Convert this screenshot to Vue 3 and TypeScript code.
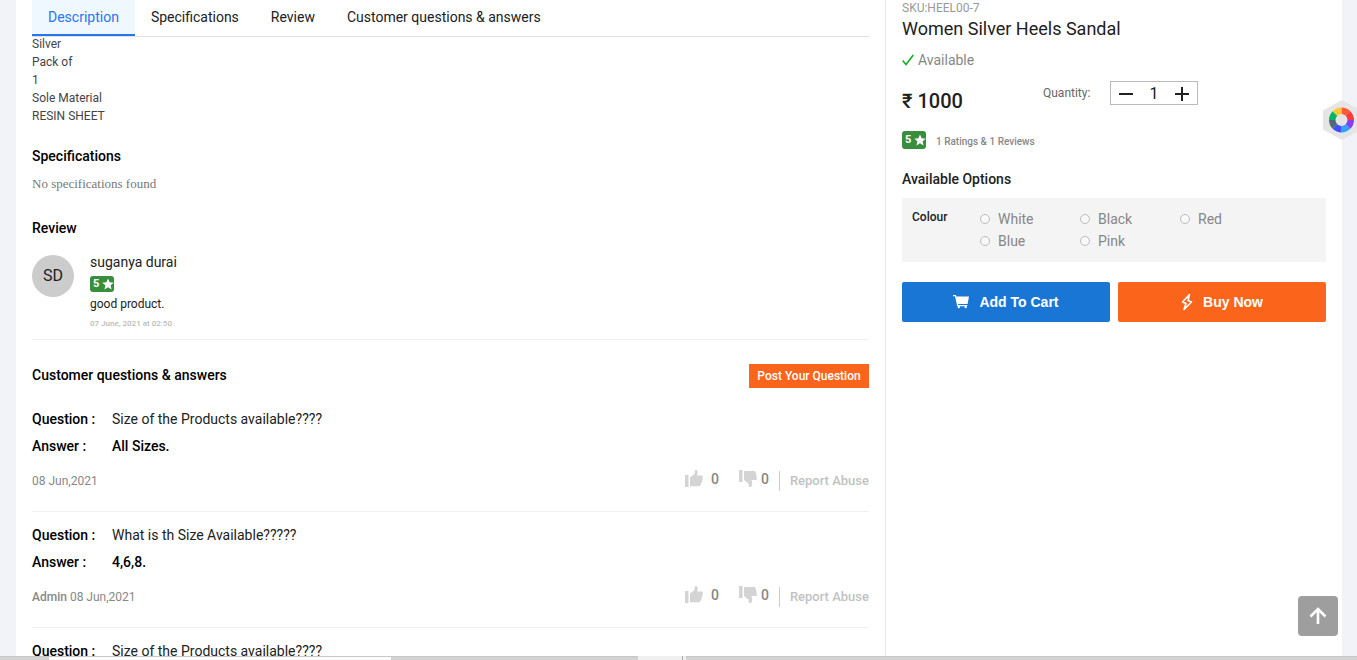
<script setup lang="ts">
import { ref } from 'vue'

interface Qa {
  question: string
  answer?: string
  author?: string
  date?: string
}

const tabs = ['Description', 'Specifications', 'Review', 'Customer questions & answers']
const activeTab = ref(tabs[0])
const details = ['Silver', 'Pack of', '1', 'Sole Material', 'RESIN SHEET']
const colours = ['White', 'Black', 'Red', 'Blue', 'Pink']
const colour = ref('')
const quantity = ref(1)

const questions: Qa[] = [
  { question: 'Size of the Products available????', answer: 'All Sizes.', date: '08 Jun,2021' },
  { question: 'What is th Size Available?????', answer: '4,6,8.', author: 'Admin', date: '08 Jun,2021' },
  { question: 'Size of the Products available????' },
]

const wheel = ['#ff5a36', '#f93a3f', '#8a3df0', '#35a0fb', '#3d50fb', '#526a78', '#00b564', '#ffc832'].map((fill, i) => {
  const a = ((i * 45 - 90) * Math.PI) / 180
  const b = a + Math.PI / 4
  const p = (r: number, t: number) => `${r * Math.cos(t)} ${r * Math.sin(t)}`
  return { fill, d: `M${p(12.5, a)}A12.5 12.5 0 0 1 ${p(12.5, b)}L${p(6, b)}A6 6 0 0 0 ${p(6, a)}Z` }
})
</script>

<template>
  <div class="page">
    <div class="sheet">
      <main class="info">
        <nav class="tabs">
          <a
            v-for="tab in tabs"
            :key="tab"
            href="#"
            class="tab"
            :class="{ active: tab === activeTab }"
            @click.prevent="activeTab = tab"
          >{{ tab }}</a>
        </nav>

        <section class="details">
          <p v-for="line in details" :key="line">{{ line }}</p>
        </section>

        <section class="block">
          <h2>Specifications</h2>
          <p class="empty">No specifications found</p>
        </section>

        <section class="block reviews">
          <h2>Review</h2>
          <article class="review">
            <div class="avatar">SD</div>
            <div class="review-body">
              <div class="reviewer">suganya durai</div>
              <span class="badge">5<svg viewBox="0 0 24 24"><path d="M12 1l3.200 7.600 8.300.7-6.300 5.400 1.900 8.100L12 18.500l-7.100 4.300 1.900-8.100L.5 9.300l8.300-.7z" /></svg></span>
              <p class="comment">good product.</p>
              <time class="when">07 June, 2021 at 02:50</time>
            </div>
          </article>
        </section>

        <section class="qa">
          <header class="qa-head">
            <h2>Customer questions &amp; answers</h2>
            <button type="button" class="post">Post Your Question</button>
          </header>
          <article v-for="(item, i) in questions" :key="i" class="qa-item">
            <dl>
              <dt>Question :</dt>
              <dd>{{ item.question }}</dd>
              <template v-if="item.answer">
                <dt>Answer :</dt>
                <dd class="answer">{{ item.answer }}</dd>
              </template>
            </dl>
            <footer v-if="item.date" class="meta">
              <span class="by"><b v-if="item.author">{{ item.author }}&nbsp;</b>{{ item.date }}</span>
              <button type="button" class="vote up" aria-label="Helpful">
                <svg viewBox="0 0 18 17"><path class="cuff" d="M0 5h3.500v12H0z" /><path d="M5 7.500L9.500 4l.5-4h1.500C13 1 13 3 12 5.500h5c1.300.4 1.200 2 .5 2.500.5.900.3 1.900-.4 2.400.3.900.1 1.700-.7 2.200.2 1-.2 1.700-.9 2-.1 1-.6 1.600-1.500 1.600H5z" /></svg>0
              </button>
              <button type="button" class="vote down" aria-label="Not helpful">
                <svg viewBox="0 0 18 17"><path class="cuff" d="M0 0h3.500v12H0z" /><path d="M5 1h10.500c1 .2 1 1 .9 1.500.7.500.9 1.300.6 2 .7.600.7 1.500.3 2.200.9.800.9 3-.3 3.300h-4.500c1 3 1 5.500-.5 6.900H10l-.5-3.500L5 10z" /></svg>0
              </button>
              <button type="button" class="report">Report Abuse</button>
            </footer>
          </article>
        </section>
      </main>

      <aside class="buy">
        <div class="sku">SKU:HEEL00-7</div>
        <h1>Women Silver Heels Sandal</h1>
        <div class="stock">
          <svg viewBox="0 0 12 12"><path d="M.7 6.500l3.300 4L11.300 1" /></svg>Available
        </div>
        <div class="price-row">
          <div class="price">₹ 1000</div>
          <span class="qty-label">Quantity:</span>
          <div class="stepper">
            <button type="button" aria-label="Decrease quantity" @click="quantity = Math.max(1, quantity - 1)">
              <svg viewBox="0 0 14 14"><path d="M0 7h14" /></svg>
            </button>
            <output>{{ quantity }}</output>
            <button type="button" aria-label="Increase quantity" @click="quantity++">
              <svg viewBox="0 0 14 14"><path d="M0 7h14M7 0v14" /></svg>
            </button>
          </div>
        </div>
        <div class="rating">
          <span class="badge large">5<svg viewBox="0 0 24 24"><path d="M12 1l3.200 7.600 8.300.7-6.300 5.400 1.900 8.100L12 18.500l-7.100 4.300 1.900-8.100L.5 9.300l8.300-.7z" /></svg></span>
          <span>1 Ratings &amp; 1 Reviews</span>
        </div>
        <h2>Available Options</h2>
        <fieldset class="options" aria-label="Colour">
          <div class="option-name">Colour</div>
          <div class="choices">
            <label v-for="name in colours" :key="name">
              <input v-model="colour" type="radio" name="colour" :value="name" />{{ name }}
            </label>
          </div>
        </fieldset>
        <div class="actions">
          <button type="button" class="cart">
            <svg viewBox="0 0 16 14"><path d="M0 0h2.800l.6 1.600H16L14.600 9H5l.3 1h8.900v1.200H4.300L2 1.200H0z" /><circle cx="5.800" cy="12" r="1.200" /><circle cx="12.700" cy="12" r="1.200" /></svg>
            Add To Cart
          </button>
          <button type="button" class="now">
            <svg viewBox="0 0 12 18"><path d="M8.500 1.500L1.500 9l3.500 1.500-2 6L10.500 9 7 7.500z" /></svg>
            Buy Now
          </button>
        </div>
      </aside>
    </div>

    <button type="button" class="widget" aria-label="Colour tools">
      <svg viewBox="0 0 40 40">
        <path class="hex" d="M19 0L38 10.500v19L19 40 0 29.500v-19z" />
        <g transform="translate(18.500 20)"><path v-for="s in wheel" :key="s.fill" :d="s.d" :fill="s.fill" /></g>
      </svg>
    </button>
    <button type="button" class="to-top" aria-label="Back to top">
      <svg viewBox="0 0 18 18"><path d="M9 17V2M1.500 9.500L9 2l7.500 7.500" /></svg>
    </button>
    <div class="bar"><i class="thumb"></i><i class="mark"></i></div>
  </div>
</template>

<style>
html, body { margin: 0; overflow: hidden; }
</style>

<style scoped>
* { box-sizing: border-box; }
.page {
  height: 100vh;
  overflow: hidden;
  padding: 0 15px 0 16px;
  background: #f1f3f8;
  color: #212121;
  font: 14px/20px Roboto, "Liberation Sans", sans-serif;
}
h1, h2, p, dl, dd { margin: 0; }
button { margin: 0; padding: 0; border: 0; background: none; color: inherit; font: inherit; cursor: pointer; }
svg { display: block; flex: none; }
h2 { color: #000; font-size: 14px; font-weight: 500; line-height: 20px; }

.sheet { display: flex; min-height: 100vh; background: #fff; }
.info { flex: 1; min-width: 0; padding: 0 16px; }
.buy { width: 457px; padding: 0 16px; border-left: 1px solid #e6e6e6; }

.tabs { display: flex; border-bottom: 1px solid #e0e0e0; }
.tab { padding: 0 16px; border-bottom: 2px solid transparent; color: #212121; line-height: 34px; text-decoration: none; }
.tab.active { background: #f0f8ff; border-color: #2874f0; color: #2874f0; }

.details { margin-top: -2px; color: #444; font-size: 12px; line-height: 18px; }
.block { padding-top: 21px; }
.empty { margin-top: 8px; color: #777; font: 13px/20px "Liberation Serif", serif; }
.reviews { padding-top: 24px; }

.review { display: flex; gap: 16px; padding: 14px 0 10px; border-bottom: 1px solid #f0f0f0; }
.avatar { width: 42px; height: 42px; margin-top: 3px; border-radius: 50%; background: #ccc; font-size: 16px; line-height: 42px; text-align: center; }
.review-body { display: flex; flex-direction: column; align-items: flex-start; }
.reviewer { line-height: 20px; }
.badge {
  display: flex; align-items: center; justify-content: space-between;
  width: 24px; height: 16px; padding: 0 0 0 3px; border-radius: 3px;
  background: #388e3c; color: #fff; font-size: 11px; font-weight: 700; line-height: 16px;
}
.badge svg { width: 12px; height: 12px; fill: #fff; }
.badge.large { height: 18px; line-height: 18px; }
.reviewer + .badge { margin-top: 4px; }
.comment { margin-top: 2px; font-size: 12px; line-height: 20px; }
.when { margin-top: 4px; color: #bbb; font-size: 8px; font-weight: 500; line-height: 11px; }

.qa-head { display: flex; align-items: flex-start; justify-content: space-between; padding: 24px 0 8px; }
.qa-head h2 { line-height: 22px; }
.post { width: 120px; height: 24px; background: #fb641b; color: #fff; font-size: 12px; font-weight: 500; }
.qa-item { padding: 10px 0 20px; border-bottom: 1px solid #f0f0f0; }
dl { display: grid; grid-template-columns: 80px 1fr; line-height: 27px; }
dt { color: #000; font-weight: 500; }
dd { color: #212121; }
.answer { color: #000; font-weight: 500; }
.meta { display: flex; align-items: flex-end; padding-top: 10px; color: #878787; }
.by { flex: 1; font-size: 12px; }
.by b { font-weight: 500; }
.vote { display: flex; align-items: center; gap: 8px; height: 17px; margin-bottom: 4px; font-weight: 500; }
.vote svg { width: 18px; height: 17px; fill: #d4d4d4; }
.down { gap: 4px; margin-left: 20px; margin-right: 10px; }
.report { height: 20px; margin-top: 1px; padding-left: 10px; border-left: 1px solid #ccc; color: #c2c2c2; font-size: 13px; font-weight: 500; }

.sku { color: #999; font-size: 12px; line-height: 16px; }
h1 { padding-top: 1px; font-size: 18px; font-weight: 400; line-height: 24px; }
.stock { display: flex; align-items: center; gap: 4px; margin-top: 9px; color: #878787; }
.stock svg { width: 12px; height: 12px; fill: none; stroke: #14a81c; stroke-width: 1.5; }
.price-row { display: flex; align-items: flex-start; padding-top: 11px; }
.price { width: 141px; padding-top: 8px; font-size: 20px; font-weight: 500; line-height: 24px; }
.qty-label { width: 67px; padding-top: 2px; color: #666; font-size: 12px; }
.stepper { display: flex; align-items: center; justify-content: space-between; width: 88px; height: 24px; padding: 2px 8px 0; border: 1px solid #bbb; font-size: 16px; }
.stepper svg { width: 14px; height: 14px; fill: none; stroke: #212121; stroke-width: 2; }
.rating { display: flex; align-items: flex-start; gap: 10px; margin: 18px 0 16px; color: #878787; font-size: 10px; line-height: 22px; font-weight: 500; }
.buy h2 { color: #212121; }
.options { display: flex; margin: 9px 0 20px; padding: 10px; border: 0; background: #f4f4f4; }
.option-name { width: 68px; font-size: 12px; font-weight: 500; line-height: 18px; }
.choices { flex: 1; display: grid; grid-template-columns: repeat(auto-fill, 100px); color: #878787; line-height: 22px; }
.choices label { display: flex; align-items: center; gap: 8px; }
.choices input { appearance: none; width: 10px; height: 10px; margin: 0; border: 1px solid #bbb; border-radius: 50%; background: #f8f8f8; }
.choices input:checked { border: 3px solid #2874f0; }
.actions { display: flex; gap: 8px; }
.actions button { flex: 1; display: flex; align-items: center; justify-content: center; gap: 10px; height: 40px; border-radius: 2px; color: #fff; font: 700 14px/20px "Liberation Sans", Arial, sans-serif; }
.cart { background: #1976d5; }
.now { background: #fb641b; }
.cart svg { width: 16px; height: 14px; fill: #fff; }
.now svg { width: 12px; height: 18px; fill: none; stroke: #fff; stroke-width: 1.6; stroke-linejoin: round; }

.widget { position: fixed; right: -6px; top: 100px; width: 40px; height: 40px; }
.hex { fill: #e5e5e5; }
.to-top { position: fixed; right: 19px; bottom: 24px; display: grid; place-items: center; width: 40px; height: 40px; border-radius: 4px; background: #9e9e9e; }
.to-top svg { width: 18px; height: 18px; fill: none; stroke: #fff; stroke-width: 2.6; }
.bar { position: fixed; left: 0; right: 0; bottom: 0; height: 4px; border-top: 1px solid #c8c8c8; background: linear-gradient(to right, #d2d2d2 49px, #fff 49px, #fff 391px, #d2d2d2 391px); }
.thumb { position: absolute; left: 638px; top: -1px; width: 48px; height: 4px; background: #f0f0f0; }
.mark { position: absolute; left: 682px; top: -1px; width: 1px; height: 4px; background: #aaa; }
</style>
